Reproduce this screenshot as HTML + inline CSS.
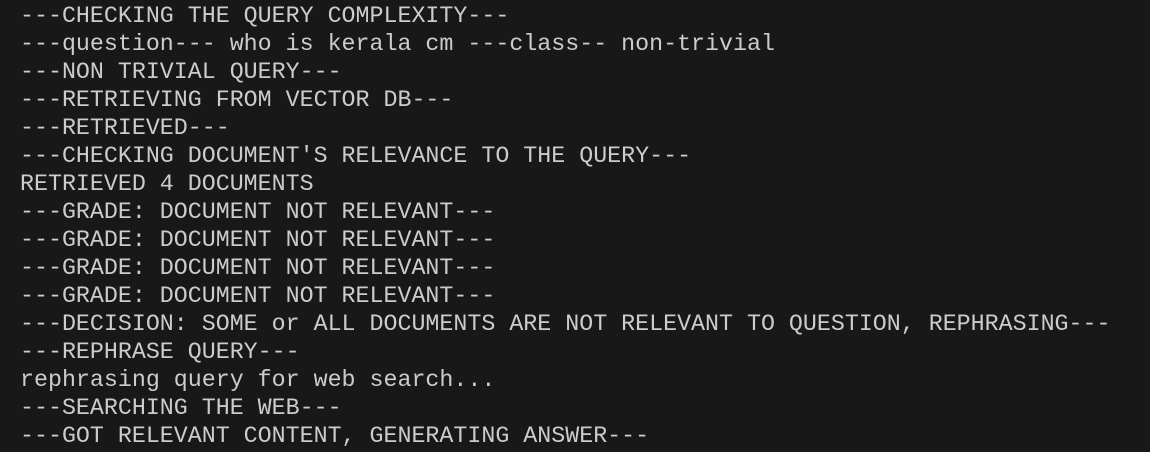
<!DOCTYPE html>
<html><head><style>
html,body{margin:0;padding:0;background:#181818;width:1150px;height:452px;overflow:hidden}
pre{margin:0;position:absolute;left:20px;top:2px;font-family:"Liberation Mono",monospace;font-size:23.3px;line-height:28px;color:#cccccc}
</style></head><body>
<pre>---CHECKING THE QUERY COMPLEXITY---
---question--- who is kerala cm ---class-- non-trivial
---NON TRIVIAL QUERY---
---RETRIEVING FROM VECTOR DB---
---RETRIEVED---
---CHECKING DOCUMENT'S RELEVANCE TO THE QUERY---
RETRIEVED 4 DOCUMENTS
---GRADE: DOCUMENT NOT RELEVANT---
---GRADE: DOCUMENT NOT RELEVANT---
---GRADE: DOCUMENT NOT RELEVANT---
---GRADE: DOCUMENT NOT RELEVANT---
---DECISION: SOME or ALL DOCUMENTS ARE NOT RELEVANT TO QUESTION, REPHRASING---
---REPHRASE QUERY---
rephrasing query for web search...
---SEARCHING THE WEB---
---GOT RELEVANT CONTENT, GENERATING ANSWER---</pre>
</body></html>
